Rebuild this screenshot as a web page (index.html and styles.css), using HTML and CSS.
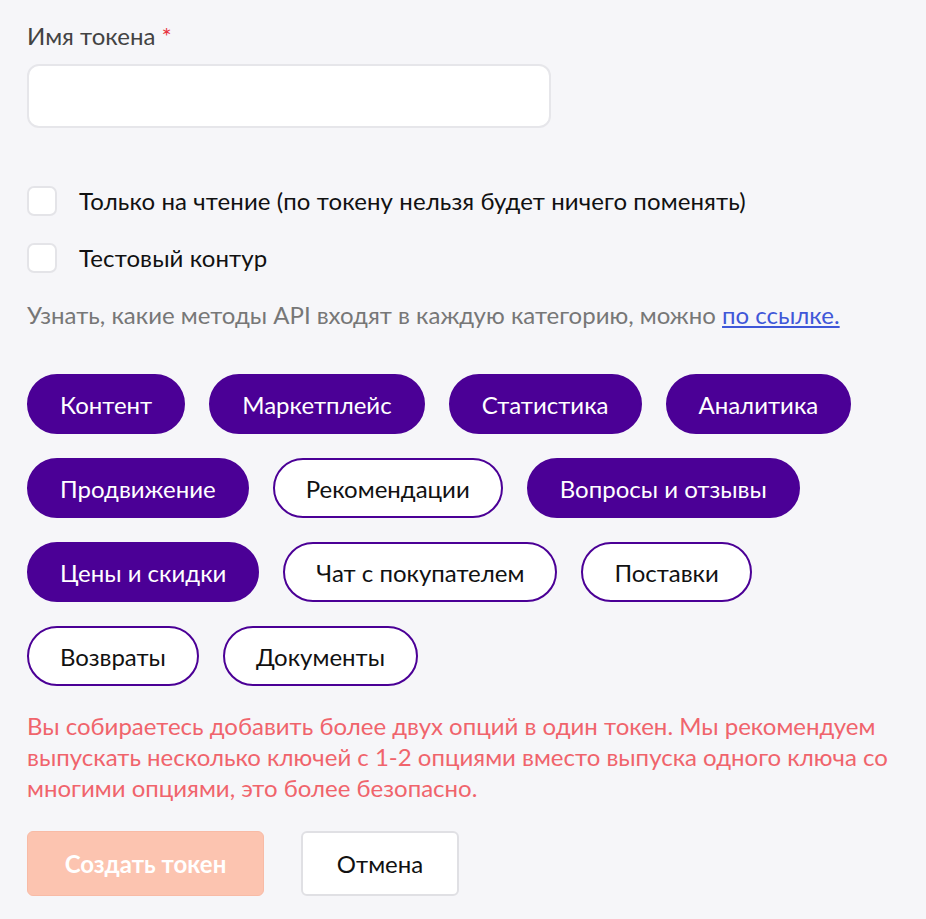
FILE: index.html
```html
<!DOCTYPE html>
<html lang="ru">
<head>
<meta charset="utf-8">
<link rel="stylesheet" href="styles.css">
</head>
<body>
<div class="form">
  <label class="field-label">Имя токена <span class="req">*</span></label>
  <div class="input"></div>

  <div class="checks">
    <label class="check"><span class="box"></span><span>Только на чтение (по токену нельзя будет ничего поменять)</span></label>
    <label class="check"><span class="box"></span><span>Тестовый контур</span></label>
  </div>

  <p class="hint">Узнать, какие методы API входят в каждую категорию, можно <a href="#">по ссылке.</a></p>

  <div class="chips">
    <span class="chip on">Контент</span>
    <span class="chip on">Маркетплейс</span>
    <span class="chip on">Статистика</span>
    <span class="chip on">Аналитика</span>
    <span class="chip on">Продвижение</span>
    <span class="chip">Рекомендации</span>
    <span class="chip on">Вопросы и отзывы</span>
    <span class="chip on">Цены и скидки</span>
    <span class="chip">Чат с покупателем</span>
    <span class="chip">Поставки</span>
    <span class="chip">Возвраты</span>
    <span class="chip">Документы</span>
  </div>

  <p class="warn">Вы собираетесь добавить более двух опций в один токен. Мы рекомендуем выпускать несколько ключей с 1-2 опциями вместо выпуска одного ключа со многими опциями, это более безопасно.</p>

  <div class="actions">
    <button class="btn primary">Создать токен</button>
    <button class="btn secondary">Отмена</button>
  </div>
</div>
</body>
</html>
```
FILE: styles.css
```css
* { box-sizing: border-box; }
html, body { margin: 0; background: #f6f6f9; }
body { font-family: Lato, "Noto Sans", sans-serif; color: #1a1a1a; }
.form { padding: 22px 27px 0 27px; width: 926px; }
.field-label { display: block; font-size: 24px; line-height: 28px; color: #434343; }
.req { color: #e8343f; }
.input { margin-top: 14px; width: 524px; height: 64px; background: #fff; border: 2px solid #e6e6ea; border-radius: 12px; }
.checks { margin-top: 58px; display: flex; flex-direction: column; gap: 27px; }
.check { display: flex; align-items: center; gap: 22px; font-size: 24px; line-height: 30px; color: #111; letter-spacing: 0.1px; }
.box { width: 30px; height: 30px; background: #fff; border: 2px solid #e4e4e8; border-radius: 7px; flex: none; }
.hint { margin: 27px 0 0 0; font-size: 24px; line-height: 30px; color: #777; }
.hint a { color: #3f57d8; text-decoration: underline; }
.chips { margin-top: 44px; display: flex; flex-wrap: wrap; gap: 24px; width: 850px; }
.chip { height: 60px; padding: 0 31px; border-radius: 30px; border: 2px solid #4b0096; background: #fff; color: #111; font-size: 24px; display: inline-flex; align-items: center; }
.chip.on { background: #4b0096; color: #fff; }
.warn { margin: 24px 0 0 0; font-size: 24px; line-height: 31px; color: #f0646c; width: 880px; }
.actions { margin-top: 28px; display: flex; gap: 37px; }
.btn { height: 65px; font-family: Lato, "Noto Sans", sans-serif; font-size: 24px; border-radius: 6px; padding: 0; }
.primary { width: 237px; background: #fcc4b0; color: #fff; border: 1px solid #f8bba6; font-weight: 700; }
.secondary { width: 158px; background: #fff; color: #111; border: 2px solid #e0e0e4; }
```
